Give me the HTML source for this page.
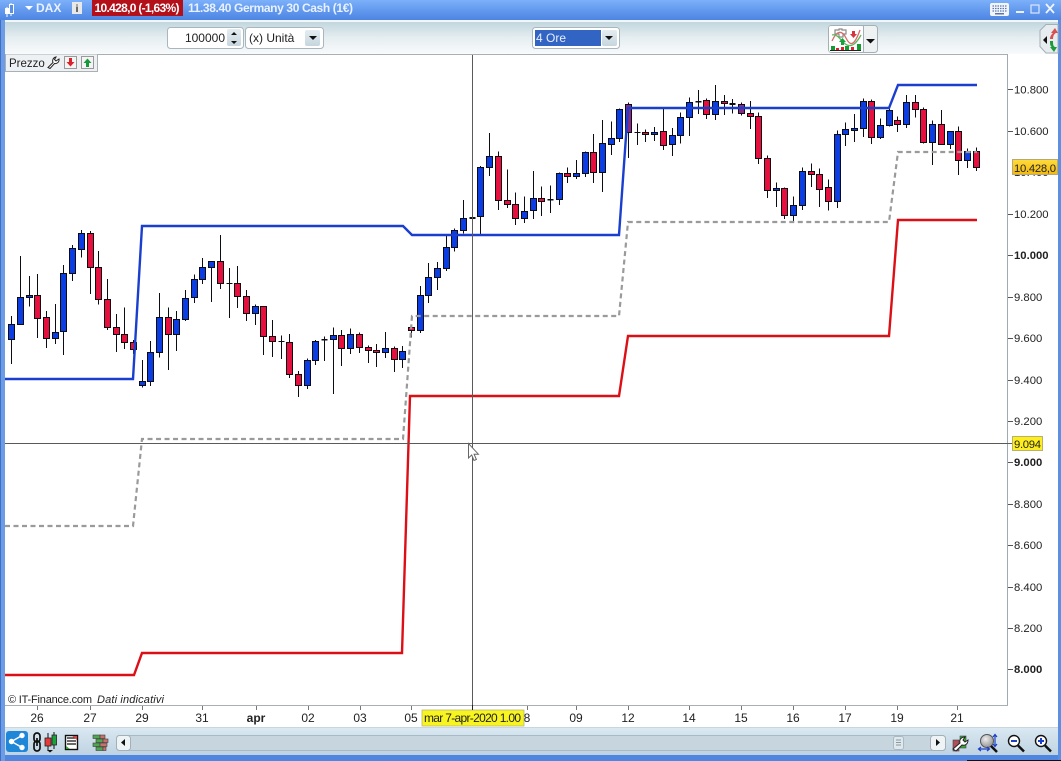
<!DOCTYPE html>
<html><head><meta charset="utf-8"><title>DAX</title>
<style>
html,body{margin:0;padding:0;background:#fff;width:1061px;height:761px;overflow:hidden}
svg{display:block;position:absolute;left:0;top:0}
text{font-family:"Liberation Sans",sans-serif}
.ax{font-size:11.3px;fill:#222;text-anchor:start}
.xl{font-size:12px;fill:#222;text-anchor:middle}
</style></head><body>
<svg width="1061" height="761" viewBox="0 0 1061 761" xmlns="http://www.w3.org/2000/svg">
<defs>
<linearGradient id="tb" x1="0" y1="0" x2="0" y2="1"><stop offset="0" stop-color="#7cb0fa"/><stop offset="1" stop-color="#4c84e2"/></linearGradient>
<linearGradient id="tool" x1="0" y1="0" x2="0" y2="1"><stop offset="0" stop-color="#c2d6de"/><stop offset=".5" stop-color="#e6eef1"/><stop offset="1" stop-color="#f8fafb"/></linearGradient>
<linearGradient id="bot" x1="0" y1="0" x2="0" y2="1"><stop offset="0" stop-color="#dbe9f2"/><stop offset="1" stop-color="#bed3e2"/></linearGradient>
<linearGradient id="btn" x1="0" y1="0" x2="0" y2="1"><stop offset="0" stop-color="#e4edf1"/><stop offset="1" stop-color="#c6d6de"/></linearGradient>
<linearGradient id="gold" x1="0" y1="0" x2="0" y2="1"><stop offset="0" stop-color="#ffdc3c"/><stop offset="1" stop-color="#f2b90e"/></linearGradient>
<radialGradient id="lens" cx=".4" cy=".35" r=".7"><stop offset="0" stop-color="#eeeeee"/><stop offset="1" stop-color="#8e8e8e"/></radialGradient>
</defs>

<!-- window frame -->
<rect width="1061" height="761" fill="#4f86e0"/>
<rect x="0" y="0" width="1061" height="20" fill="url(#tb)"/>
<rect x="5" y="20" width="1053" height="2" fill="#f2f7fb"/>
<rect x="5" y="22" width="1053" height="32" fill="url(#tool)"/>
<rect x="5" y="54" width="1053" height="673" fill="#fff"/>
<rect x="0" y="20" width="5" height="741" fill="#6c9ce6"/>
<rect x="0" y="20" width="1" height="741" fill="#3f6fc4"/>
<rect x="1058" y="20" width="3" height="741" fill="#5a8fe4"/>

<!-- title bar -->
<g>
<path d="M7 7V17M11 3V16" stroke="#fff" stroke-width="1" fill="none"/>
<rect x="5" y="8" width="4" height="6" fill="#fff"/><rect x="9.500" y="4.500" width="4" height="9" fill="#5a90e8" stroke="#fff"/>
<path d="M25 6h8l-4 4z" fill="#fff"/>
<text x="36" y="12" font-size="12" font-weight="bold" fill="#eaf2ff">DAX</text>
<rect x="72" y="2" width="10" height="12" fill="#e8e8e8"/><text x="77" y="12" font-size="10" font-weight="bold" fill="#333" text-anchor="middle">i</text>
<rect x="92" y="0" width="91" height="16" fill="#b3101a"/>
<text x="94.500" y="12" font-size="12" font-weight="bold" fill="#fff" textLength="85">10.428,0 (-1,63%)</text>
<text x="188" y="12" font-size="12" font-weight="bold" fill="#e8f1ff" textLength="165">11.38.40 Germany 30 Cash (1€)</text>
<rect x="990" y="3" width="19" height="13" rx="2" fill="#f2f6fc"/>
<path d="M992.500 6h14M992.500 8.500h14M992.500 11h14" stroke="#5877b0" stroke-width="1.200" stroke-dasharray="1.500 1"/>
<rect x="995" y="13" width="9" height="1.500" fill="#5877b0"/>
<rect x="1016" y="11" width="8" height="2" fill="#e8f0fc"/>
<rect x="1031" y="5" width="8" height="8" fill="none" stroke="#dbe6f8" stroke-width="1.200"/>
<path d="M1046 4l8 9M1054 4l-8 9" stroke="#f0f5fd" stroke-width="1.800"/>
</g>

<!-- top toolbar -->
<rect x="167.500" y="27.500" width="76" height="21" rx="3" fill="#fff" stroke="#a9b6bd"/>
<text x="225" y="42" font-size="12" fill="#222" text-anchor="end">100000</text>
<rect x="227" y="29" width="14" height="17" rx="2" fill="url(#btn)"/>
<path d="M231 35l3-3 3 3z M231 41l3 3 3-3z" fill="#111"/>
<rect x="245.500" y="27.500" width="78" height="21" rx="3" fill="#fff" stroke="#a9b6bd"/>
<text x="249" y="42" font-size="12" fill="#222">(x) Unità</text>
<rect x="305" y="30" width="15" height="16" rx="2" fill="url(#btn)"/>
<path d="M309 36h8l-4 4z" fill="#111"/>
<rect x="532.500" y="27.500" width="87" height="21" rx="3" fill="#fff" stroke="#a9b6bd"/>
<rect x="535" y="30" width="66" height="16" fill="#3264c4"/>
<text x="536" y="42" font-size="12" fill="#e8eefc">4 Ore</text>
<rect x="602" y="30" width="15" height="16" rx="2" fill="url(#btn)"/>
<path d="M605 36h8l-4 4z" fill="#111"/>

<!-- indicator button -->
<rect x="828.500" y="25.500" width="49" height="27" rx="3" fill="#eef2f3" stroke="#a4b0b6"/>
<rect x="829" y="26" width="34" height="26" rx="2" fill="#fff"/>
<line x1="863.500" y1="26" x2="863.500" y2="52" stroke="#a4b0b6"/>
<path d="M866 39h9l-4.500 4.500z" fill="#111"/>
<path d="M835 30h4v-1h3v1h4v4h-3v3h-4v-3h-4z" fill="#fff" stroke="#8a8a8a" stroke-width="1.200"/>
<path d="M832 41C837 30 842 30 846 38S854 47 860 30" fill="none" stroke="#d86a6a" stroke-width="1.300"/>
<path d="M832 35C838 33 842 43 847 45S856 44 861 35" fill="none" stroke="#5cb85c" stroke-width="1.300"/>
<path d="M852 31h3v3h2l-3.500 4-3.500-4h2z" fill="#d8343c"/>
<path d="M841 45h3v-3h2l-3.500-4-3.500 4h2z" fill="#17a23a"/>
<rect x="831" y="46" width="4" height="4" fill="#139c32"/><rect x="836" y="48" width="3" height="2" fill="#d23"/><rect x="841" y="47" width="3" height="3" fill="#d23"/><rect x="845" y="46" width="4" height="4" fill="#139c32"/><rect x="851" y="47" width="3" height="3" fill="#d23"/><rect x="857" y="44" width="4" height="6" fill="#139c32"/>
<rect x="830" y="50" width="31" height="1" fill="#222"/>

<!-- right side tab -->
<path d="M1058 24.500h-12l-6 6v16l6 6.500h12z" fill="#e6ecef" stroke="#a4b0b6"/>
<path d="M1047 36l-4 4 4 4z" fill="#111"/>
<path d="M1050 39c0-3 2-5 3-6h-2l4-5 3 5h-2c-2 1-3 3-3 6z" fill="#d85050"/>
<path d="M1050 41c0 3 0 5 2 6h-2l4 5 3-5h-2c-2-1-2-3-2-6z" fill="#1f9a3a"/>

<!-- chart borders -->
<rect x="5" y="54" width="1002" height="1" fill="#a9b0b3"/>
<rect x="1007" y="54" width="1" height="652" fill="#a0aab2"/>
<rect x="5" y="705" width="1003" height="1" fill="#a9b0b3"/>

<!-- Candles -->
<g stroke-linejoin="miter" shape-rendering="crispEdges">
<g transform="translate(0,220) scale(.33333)" stroke="#0c0c14" stroke-width="3">
<path fill="none" d="M34 288V432M61 108V313M88 168V260M112 162V354M139 273V384M166 252V372M190 135V405M217 75V183M244 30V112M271 33V222M295 93V254M322 177V330M349 282V396M373 262V387M400 360V402M427 420V503M451 363V498M478 219V413M505 262V450M529 273V393M556 210V303M583 163V249M607 114V192M634 124V246M661 45V207M688 144V294M712 138V264M679 190h18"/>
<path fill="#0b3de2" d="M25 314h18v44h-18zM52 232h18v81h-18zM79 226h18v7h-18zM157 337h18v18h-18zM181 160h18v174h-18zM208 85h18v75h-18zM235 40h18v48h-18zM418 484h18v13h-18zM442 397h18v87h-18zM469 292h18v105h-18zM520 298h18v45h-18zM547 235h18v63h-18zM574 178h18v55h-18zM598 142h18v36h-18zM625 124h18v18h-18z"/>
<path fill="#e6103e" d="M103 226h18v69h-18zM130 292h18v63h-18zM262 40h18v102h-18zM286 142h18v96h-18zM313 238h18v84h-18zM340 322h18v21h-18zM364 343h18v24h-18zM391 367h18v21h-18zM496 292h18v51h-18zM652 124h18v66h-18zM703 190h18v39h-18z"/>
</g>
<g transform="translate(240,230) scale(.33333)" stroke="#0c0c14" stroke-width="3">
<path fill="none" d="M19 180V273M46 223V285M70 229V375M97 270V381M124 316V387M148 312V444M175 423V501M202 385V477M226 330V405M253 319V393M280 292V492M304 300V408M331 295V372M358 307V369M385 346V399M409 342V411M436 306V384M463 349V426M487 348V414M514 287V322M541 168V309M565 99V219M592 96V180M619 18V123M115 334h18"/>
<path fill="none" stroke-width="5" d="M244 329h18"/>
<path fill="#e6103e" d="M10 199h18v51h-18zM61 229h18v90h-18zM88 319h18v15h-18zM139 337h18v96h-18zM166 433h18v33h-18zM295 316h18v39h-18zM349 313h18v39h-18zM376 352h18v9h-18zM400 361h18v6h-18zM454 355h18v33h-18zM505 292h18v9h-18z"/>
<path fill="#0b3de2" d="M37 229h18v21h-18zM193 391h18v75h-18zM217 334h18v57h-18zM271 316h18v12h-18zM322 313h18v42h-18zM427 355h18v12h-18zM478 364h18v24h-18zM532 196h18v105h-18zM556 142h18v54h-18zM583 115h18v27h-18zM610 52h18v63h-18z"/>
</g>
<g transform="translate(400,90) scale(.33333)" stroke="#0c0c14" stroke-width="3">
<path fill="none" d="M164 415V484M190 330V430M217 318V415M241 228V432M268 129V258M295 184V360M322 238V354M346 307V405M373 319V399M400 243V387M424 289V378M451 286V369M478 247V345M502 232V279M529 210V267M556 184V261M580 132V279M607 90V306M634 94V195M658 55V156M685 37V204M712 100V165M703 127h18"/>
<path fill="none" stroke-width="5" d="M208 384h18M442 329h18"/>
<path fill="#0b3de2" d="M155 421h18v51h-18zM181 385h18v36h-18zM232 232h18v147h-18zM259 199h18v33h-18zM364 364h18v21h-18zM391 325h18v36h-18zM469 250h18v78h-18zM520 250h18v9h-18zM547 187h18v63h-18zM598 160h18v87h-18zM625 145h18v18h-18zM649 58h18v87h-18z"/>
<path fill="#e6103e" d="M286 199h18v132h-18zM313 331h18v12h-18zM337 343h18v42h-18zM415 325h18v9h-18zM493 250h18v9h-18zM571 187h18v60h-18z"/>
<path fill="#8a2a80" d="M676 43h18v84h-18z"/>
</g>
<g transform="translate(620,80) scale(.33333)" stroke="#0c0c14" stroke-width="3">
<path fill="none" d="M52 132V195M76 148V186M103 141V183M130 86V210M157 144V228M181 97V190M208 52V168M235 30V102M259 55V117M286 15V120M313 45V105M337 57V100M364 67V107M391 63V147M415 97V252M442 226V354M469 307V381M493 322V417M520 349V423M547 262V390M574 250V321M598 265V381M43 157h18"/>
<path fill="none" stroke-width="5" d="M226 65h18M328 72h18"/>
<path fill="#e6103e" d="M67 157h18v6h-18zM121 154h18v42h-18zM250 61h18v42h-18zM304 64h18v6h-18zM382 100h18v9h-18zM406 109h18v126h-18zM433 235h18v96h-18zM484 325h18v81h-18zM565 274h18v9h-18zM589 283h18v45h-18z"/>
<path fill="#0b3de2" d="M94 157h18v6h-18zM148 166h18v27h-18zM172 112h18v54h-18zM199 67h18v45h-18zM277 64h18v39h-18zM460 325h18v6h-18zM511 376h18v30h-18zM538 274h18v102h-18z"/>
<path fill="#8a2a80" d="M355 73h18v27h-18z"/>
</g>
<g transform="translate(800,80) scale(.33333)" stroke="#0c0c14" stroke-width="3">
<path fill="none" d="M85 298V392M112 151V384M136 127V198M163 102V186M190 55V171M214 58V192M241 115V177M268 85V140M292 109V156M319 45V144M346 45V112M370 82V191M397 121V255M424 90V195M451 154V207M475 139V285M502 205V264M529 202V273"/>
<path fill="#e6103e" d="M76 322h18v42h-18zM205 64h18v108h-18zM283 121h18v12h-18zM337 67h18v21h-18zM361 88h18v99h-18zM415 133h18v60h-18zM466 154h18v87h-18zM520 214h18v48h-18z"/>
<path fill="#0b3de2" d="M103 163h18v201h-18zM127 148h18v15h-18zM154 145h18v6h-18zM181 64h18v81h-18zM232 136h18v36h-18zM259 91h18v45h-18zM310 67h18v66h-18zM388 133h18v54h-18zM442 154h18v39h-18zM493 214h18v27h-18z"/>
</g>
</g>

<!-- Indicator lines -->
<polyline fill="none" stroke="#9a9a9a" stroke-width="2.200" stroke-dasharray="5 3.500" points="5,526 133,526 142,439 403,439 412,316 619,316 628,222 889,222 898,152 977,152"/>
<polyline fill="none" stroke="#dd0f16" stroke-width="2.400" points="5,675 134,675 142,653 402,653 410,396 619,396 628,336 889,336 898,220 977,220"/>
<polyline fill="none" stroke="#1a3fcf" stroke-width="2.400" points="5,379 133,379 142,226 403,226 412,235 619,235 628,108 889,108 898,85 977,85"/>

<!-- Crosshair -->
<rect x="472" y="55" width="1" height="650" fill="#5a5a5a"/>
<rect x="5" y="443" width="1007" height="1" fill="#5a5a5a"/>

<!-- Cursor -->
<path d="M468.500 443.500V458l3.200-3 2.300 5.500 2.400-1-2.300-5.300h4.300z" fill="#fff" stroke="#666" stroke-width="1"/>

<!-- Y axis -->
<g stroke="#555" stroke-width="1">
<path d="M1008 89.500h5M1008 131.500h5M1008 214.500h5M1008 255.500h5M1008 297.500h5M1008 338.500h5M1008 380.500h5M1008 421.500h5M1008 462.500h5M1008 504.500h5M1008 545.500h5M1008 587.500h5M1008 628.500h5M1008 669.500h5"/>
</g>
<g>
<text class="ax" x="1014" y="93.500">10.800</text>
<text class="ax" x="1014" y="135">10.600</text>
<text class="ax" x="1014" y="176">10.400</text>
<text class="ax" x="1014" y="218">10.200</text>
<text class="ax" x="1014" y="259" font-weight="bold">10.000</text>
<text class="ax" x="1014" y="301">9.800</text>
<text class="ax" x="1014" y="342">9.600</text>
<text class="ax" x="1014" y="384">9.400</text>
<text class="ax" x="1014" y="425">9.200</text>
<text class="ax" x="1014" y="466" font-weight="bold">9.000</text>
<text class="ax" x="1014" y="508">8.800</text>
<text class="ax" x="1014" y="549">8.600</text>
<text class="ax" x="1014" y="591">8.400</text>
<text class="ax" x="1014" y="632">8.200</text>
<text class="ax" x="1014" y="673" font-weight="bold">8.000</text>
</g>
<rect x="1012.500" y="159.500" width="45" height="15" fill="url(#gold)" stroke="#b8a878"/>
<text x="1014" y="172" font-size="11.300" fill="#222" textLength="42">10.428,0</text>
<rect x="1012.500" y="436.500" width="30" height="14" fill="#ffee1e" stroke="#b8b070"/>
<text x="1014" y="448" font-size="11.300" fill="#222" textLength="27">9.094</text>

<!-- X axis -->
<g stroke="#777" stroke-width="1">
<path d="M37.500 706v4M90.500 706v4M142.500 706v4M202.500 706v4M256.500 706v4M308.500 706v4M360.500 706v4M411.500 706v4M527.500 706v4M576.500 706v4M628.500 706v4M689.500 706v4M741.500 706v4M793.500 706v4M845.500 706v4M897.500 706v4M957.500 706v4"/>
</g>
<text class="xl" x="37" y="722">26</text>
<text class="xl" x="90" y="722">27</text>
<text class="xl" x="142" y="722">29</text>
<text class="xl" x="202" y="722">31</text>
<text class="xl" x="256" y="722" font-weight="bold">apr</text>
<text class="xl" x="308" y="722">02</text>
<text class="xl" x="360" y="722">03</text>
<text class="xl" x="411" y="722">05</text>
<text class="xl" x="527" y="722">8</text>
<text class="xl" x="576" y="722">09</text>
<text class="xl" x="628" y="722">12</text>
<text class="xl" x="689" y="722">14</text>
<text class="xl" x="741" y="722">15</text>
<text class="xl" x="793" y="722">16</text>
<text class="xl" x="845" y="722">17</text>
<text class="xl" x="897" y="722">19</text>
<text class="xl" x="957" y="722">21</text>
<rect x="422" y="710" width="102" height="16" fill="#f8f420" stroke="#b8b880" stroke-width=".8"/>
<rect x="472" y="705" width="1" height="5" fill="#222"/>
<text x="424" y="722" font-size="12" fill="#222" textLength="97">mar 7-apr-2020 1.00</text>

<!-- copyright -->
<text x="8" y="703" font-size="11" fill="#222" textLength="84">© IT-Finance.com</text>
<text x="97" y="703" font-size="11" font-style="italic" fill="#222" textLength="67">Dati indicativi</text>

<!-- Prezzo legend -->
<path d="M5.500 54.500V71.500H97.500V54.500" fill="#eef1f3" stroke="#a9b0b3"/>
<text x="9" y="67" font-size="11.500" fill="#222">Prezzo</text>
<path d="M48 67.500l5-5c-1-2 0-5 3-5.500l-1.500 2.500 1.500 1.500 3-2c.5 3-2 5-4.500 4.500l-4.500 5z" fill="#fff" stroke="#222" stroke-width="1"/>
<rect x="64.500" y="56.500" width="12" height="12" fill="#f4f4f4" stroke="#999"/>
<path d="M69 58h3v4h2.500l-4 4.500-4-4.500H69z" fill="#d8232f"/>
<rect x="81.500" y="56.500" width="12" height="12" fill="#f4f4f4" stroke="#999"/>
<path d="M86 67h3v-4h2.500l-4-4.500-4 4.500H86z" fill="#17983a"/>

<!-- bottom toolbar -->
<rect x="5" y="727" width="1053" height="28" fill="url(#bot)"/>
<rect x="5" y="727" width="1053" height="1" fill="#c9d6de"/>
<rect x="5" y="755" width="1053" height="6" fill="#4f86e0"/>
<rect x="967" y="760" width="94" height="1" fill="#111"/>

<!-- share button -->
<rect x="6" y="731" width="22" height="21" rx="3" fill="#1f87d8"/>
<g fill="#fff" stroke="#fff"><circle cx="11.500" cy="741.500" r="2.200"/><circle cx="22" cy="735.500" r="2.200"/><circle cx="22" cy="747.500" r="2.200"/><path d="M11.500 741.500L22 735.500M11.500 741.500L22 747.500" stroke-width="1.400" fill="none"/></g>
<!-- chain + candles -->
<g fill="none" stroke="#111" stroke-width="1.700"><rect x="34" y="733" width="6" height="9" rx="3"/><rect x="34" y="741" width="6" height="10" rx="3"/><path d="M37 738v8"/></g>
<path d="M48 733v18M54 732v17" stroke="#111" stroke-width="1"/>
<rect x="45" y="738" width="6" height="8" fill="#e63b3b" stroke="#222" stroke-width=".8"/>
<rect x="52" y="735" width="4.500" height="10" fill="#1aa33c" stroke="#222" stroke-width=".8"/>
<path d="M47 750h6l-3 2.500z" fill="#111"/>
<!-- list icon -->
<rect x="65.500" y="735.500" width="12" height="14" fill="#fff" stroke="#111" stroke-width="1.400"/>
<path d="M67 738h9M67 741h9M67 744h9" stroke="#111" stroke-width="1.200"/>
<path d="M72 736h5v4z" fill="#d44"/><path d="M66 749v-3l4 3z" fill="#2a2"/>
<!-- brick icon -->
<g stroke="#3d3d3d" stroke-width=".6">
<rect x="93" y="735" width="7" height="3.500" fill="#4fa84f"/><rect x="100" y="735" width="5" height="3.500" fill="#c8706a"/>
<rect x="96" y="739" width="7" height="3.500" fill="#4fa84f"/><rect x="103" y="739" width="5" height="3.500" fill="#c8706a"/>
<rect x="93" y="743" width="7" height="3.500" fill="#4fa84f"/><rect x="100" y="743" width="7" height="3.500" fill="#c8706a"/>
<rect x="96" y="747" width="7" height="3.500" fill="#4fa84f"/><rect x="103" y="747" width="3" height="3.500" fill="#c8706a"/>
</g>
<!-- scrollbar -->
<rect x="116.500" y="735.500" width="829" height="15" rx="3" fill="#c7d6de" stroke="#a9bac4"/>
<rect x="116.500" y="735.500" width="14" height="15" rx="3" fill="#eef3f5" stroke="#a4b0b6"/>
<path d="M125 739v7l-4-3.500z" fill="#111"/>
<rect x="930.500" y="735.500" width="15" height="15" rx="3" fill="#eef3f5" stroke="#a4b0b6"/>
<path d="M936 739v7l4-3.500z" fill="#111"/>
<rect x="893.500" y="736.500" width="10" height="13" rx="2" fill="#dfe8ec" stroke="#a9bac4"/>
<path d="M896 740h5M896 742.500h5M896 745h5" stroke="#8a98a0"/>
<!-- wrench tool -->
<rect x="953" y="740" width="6" height="11" fill="#b04f55" stroke="#444" stroke-width=".6"/>
<rect x="960" y="736" width="6" height="12" fill="#3aa83a" stroke="#444" stroke-width=".6"/>
<path d="M953 749l7-6c-1-3 1-6 5-6l-2 3 2 2 3-2c0 4-3 6-6 5l-6 6z" fill="#fff" stroke="#222" stroke-width="1"/>
<!-- zoom fit -->
<circle cx="987" cy="741" r="6.500" fill="url(#lens)" stroke="#555"/>
<path d="M991 746l6 6" stroke="#111" stroke-width="2.500"/>
<path d="M995 735v11M993 737l2-2.500 2 2.500M993 744l2 2.500 2-2.500M979 749h10M981 747l-2.500 2 2.500 2M987 747l2.500 2-2.500 2" fill="none" stroke="#1c3fc8" stroke-width="1.200"/>
<!-- zoom out -->
<circle cx="1014" cy="741" r="5.500" fill="#fff" stroke="#111" stroke-width="1.400"/>
<path d="M1011 741h6" stroke="#1c3fc8" stroke-width="2"/>
<path d="M1018 745.500l6 6" stroke="#111" stroke-width="2.500"/>
<!-- zoom in -->
<circle cx="1041" cy="741" r="5.500" fill="#fff" stroke="#111" stroke-width="1.400"/>
<path d="M1038 741h6M1041 738v6" stroke="#1c3fc8" stroke-width="2"/>
<path d="M1045 745.500l6 6" stroke="#111" stroke-width="2.500"/>
</svg>
</body></html>
